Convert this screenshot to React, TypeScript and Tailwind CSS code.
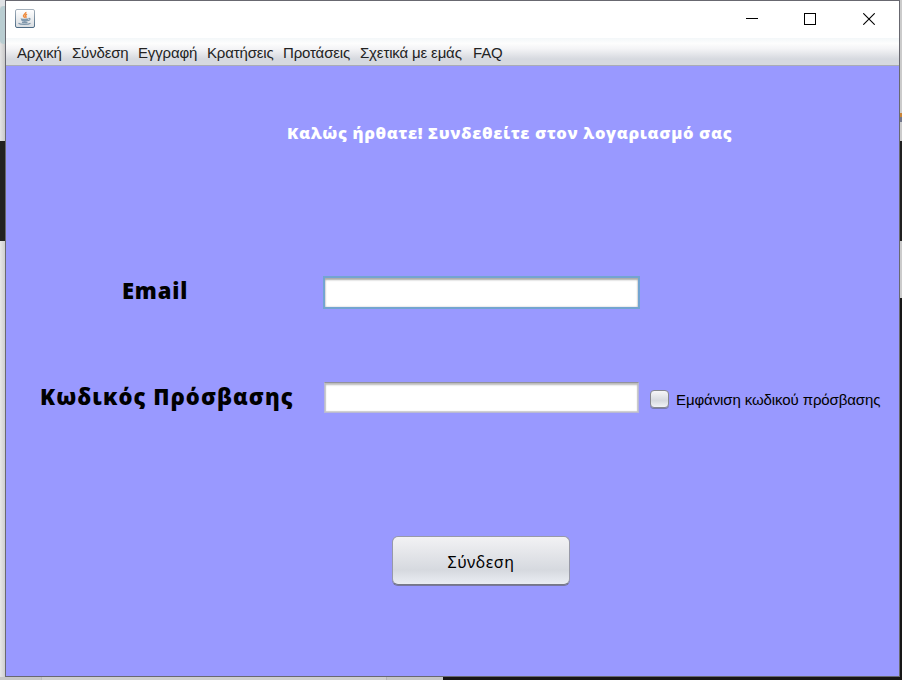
import type { ReactNode } from "react";

const menuItems = [
  { label: "Αρχική", width: "w-[55px]" },
  { label: "Σύνδεση", width: "w-[66px]" },
  { label: "Εγγραφή", width: "w-[69px]" },
  { label: "Κρατήσεις", width: "w-[76px]" },
  { label: "Προτάσεις", width: "w-[77px]" },
  { label: "Σχετικά με εμάς", width: "w-[113px]" },
  { label: "FAQ", width: "w-[40px]" },
];

function JavaIcon() {
  return (
    <svg width="20" height="19" viewBox="0 0 20 19" fill="none">
      <defs>
        <linearGradient id="tile" x1="0" y1="0" x2="0" y2="1">
          <stop offset="0" stopColor="#ffffff" />
          <stop offset="1" stopColor="#d9dde1" />
        </linearGradient>
        <linearGradient id="edge" x1="0" y1="0" x2="0" y2="1">
          <stop offset="0" stopColor="#a5b1bc" />
          <stop offset="1" stopColor="#4d6b85" />
        </linearGradient>
      </defs>
      <rect x="0.5" y="0.5" width="19" height="18" rx="1.5" fill="url(#tile)" stroke="url(#edge)" />
      <path d="M10.800 3c.5 1.500-2.500 2.400-2.300 4 .1.7.8 1.200 1.300 1.800M12 5.200c-1.500.8-2 1.500-1.200 2.300.3.400.3.900-.3 1.300" stroke="#ee8a3c" strokeWidth="1.500" />
      <path d="M5.500 9.300c1 .6 6 .6 8 0l-.5 2.500c-1 1.500-5.500 1.500-6.500 0Z" fill="#8099ae" />
      <path d="M7 13.300c1.500.4 4 .4 5.500 0M13.500 9.500c2.200-.5 2 1.700-.5 2.200M3.500 14.300c2 1.500 10 1.400 12-.1" stroke="#7f97ab" strokeWidth="1.200" />
    </svg>
  );
}

function WindowButton({ label, children }: { label: string; children: ReactNode }) {
  return (
    <button aria-label={label} className="flex h-[36px] w-[58.5px] items-center justify-center">
      {children}
    </button>
  );
}

function TitleBar() {
  return (
    <header className="flex h-[37px] shrink-0 items-start justify-between bg-white pl-[9px] pr-px">
      <div className="pt-[8px]">
        <JavaIcon />
      </div>
      <div className="flex">
        <WindowButton label="Minimize">
          <svg width="12" height="12" shapeRendering="crispEdges"><path d="M0 5.500h12" stroke="#000" /></svg>
        </WindowButton>
        <WindowButton label="Maximize">
          <svg width="12" height="12" fill="none" shapeRendering="crispEdges"><rect x=".5" y=".5" width="11" height="11" stroke="#000" /></svg>
        </WindowButton>
        <WindowButton label="Close">
          <svg width="12" height="12"><path d="M.3.3l11.400 11.400M11.700.3L.3 11.700" stroke="#000" strokeWidth="1.100" /></svg>
        </WindowButton>
      </div>
    </header>
  );
}

function MenuBar() {
  return (
    <nav className="flex h-7 shrink-0 items-center border-b border-[#a9acb5] bg-[linear-gradient(#f3f7f9_0%,#fdfdfd_20%,#f4f4f6_40%,#d6d9df_78%,#d6d9df_100%)] pl-[11px] pt-[4px] font-['Liberation_Sans',sans-serif] text-[15px] tracking-[-0.15px] text-[#232323]">
      {menuItems.map((item) => (
        <span key={item.label} className={`${item.width} shrink-0 whitespace-nowrap`}>{item.label}</span>
      ))}
    </nav>
  );
}

export default function App() {
  return (
    <div className="flex h-[680px] w-[902px] flex-col overflow-hidden bg-[#dcdcdc]">
      <div className="flex h-[677px] shrink-0">
        <div className="flex w-[5px] shrink-0 flex-col">
          <div className="h-[6px] bg-[#dfe2e5]" />
          <div className="h-[38px] rounded-l-sm bg-[#b9cdd1]" />
          <div className="h-[97px] bg-[linear-gradient(90deg,#e4e4e4,#c9c9c9)]" />
          <div className="h-[100px] bg-[#222222]" />
          <div className="grow bg-[linear-gradient(90deg,#e7e7e7,#cfcfcf)]" />
        </div>
        <main className="flex w-[895px] shrink-0 flex-col border border-[#686870] bg-[#9999ff]">
          <TitleBar />
          <MenuBar />
          <h1 className="ml-[281px] mt-[55px] h-[25px] w-[460px] whitespace-nowrap font-['Open_Sans',sans-serif] text-[16.5px] font-extrabold leading-[23px] tracking-[0.650px] text-white">
            Καλώς ήρθατε! Συνδεθείτε στον λογαριασμό σας
          </h1>
          <form className="flex flex-col">
            <div className="mt-[130px] flex h-[33px] items-center">
              <label className="-mt-[5px] w-[317px] pl-[116px] font-['Open_Sans',sans-serif] text-[22px] font-extrabold leading-8 tracking-[0.800px] text-black">Email</label>
              <input aria-label="Email" className="h-[33px] w-[317px] border-2 border-[#73a4d1] bg-white px-2 shadow-[inset_0_2px_2px_#aaa,inset_0_0_2px_#bbb] outline-none" />
            </div>
            <div className="mt-[73px] flex h-[31px] items-center">
              <label className="-mt-[3px] w-[318px] whitespace-nowrap pl-[34px] font-['Open_Sans',sans-serif] text-[22px] font-extrabold leading-8 tracking-[1.050px] text-black">Κωδικός Πρόσβασης</label>
              <input type="password" aria-label="Κωδικός" className="h-[31px] w-[315px] border border-[#b9b9d5] border-t-[#92929c] bg-white px-2 shadow-[inset_0_2px_2px_#bbb,inset_0_0_1px_1px_#ccc] outline-none" />
              <label className="ml-[11px] mt-[3px] flex items-center font-['Liberation_Sans',sans-serif] text-[15px] tracking-[-0.1px] text-black">
                <input type="checkbox" className="mr-[7px] h-[18px] w-[19px] appearance-none rounded-[4px] border border-[#85878f] bg-[linear-gradient(#f6f6f8,#d6d9df_60%,#f0f2f6)] shadow-[0_1px_0_#777aaa]" />
                <span className="whitespace-nowrap pt-[2px]">Εμφάνιση κωδικού πρόσβασης</span>
              </label>
            </div>
            <button type="button" className="ml-[386px] mt-[123px] h-[49px] w-[178px] rounded-[6px] border border-[#9799a8] border-b-[#777986] bg-[linear-gradient(#f2f2f4_0%,#d6d9df_70%,#eaedf3_100%)] pt-[2px] font-['Noto_Sans',sans-serif] text-[16px] tracking-[0.600px] text-black shadow-[0_1px_0_#77779c]">
              Σύνδεση
            </button>
          </form>
        </main>
        <div className="flex w-[2px] shrink-0 flex-col">
          <div className="h-[113px] bg-[#cbcbcb]" />
          <div className="h-[4px] bg-[#c88438]" />
          <div className="h-[5px] bg-[#71768c]" />
          <div className="h-[19px] bg-[#cbcbcb]" />
          <div className="h-[100px] bg-[#202020]" />
          <div className="h-[57px] bg-[#cbcbcb]" />
          <div className="grow bg-[#171717]" />
        </div>
      </div>
      <footer className="flex h-[3px] shrink-0">
        <div className="w-[42px] border-r border-[#bcbcbc] bg-[#c7c7c7]" />
        <div className="w-[345px] border-r border-[#b5b5b5] bg-[#cfcfcf]" />
        <div className="w-[56px] bg-[#c6c6c6]" />
        <div className="grow bg-[#181616]" />
      </footer>
    </div>
  );
}
